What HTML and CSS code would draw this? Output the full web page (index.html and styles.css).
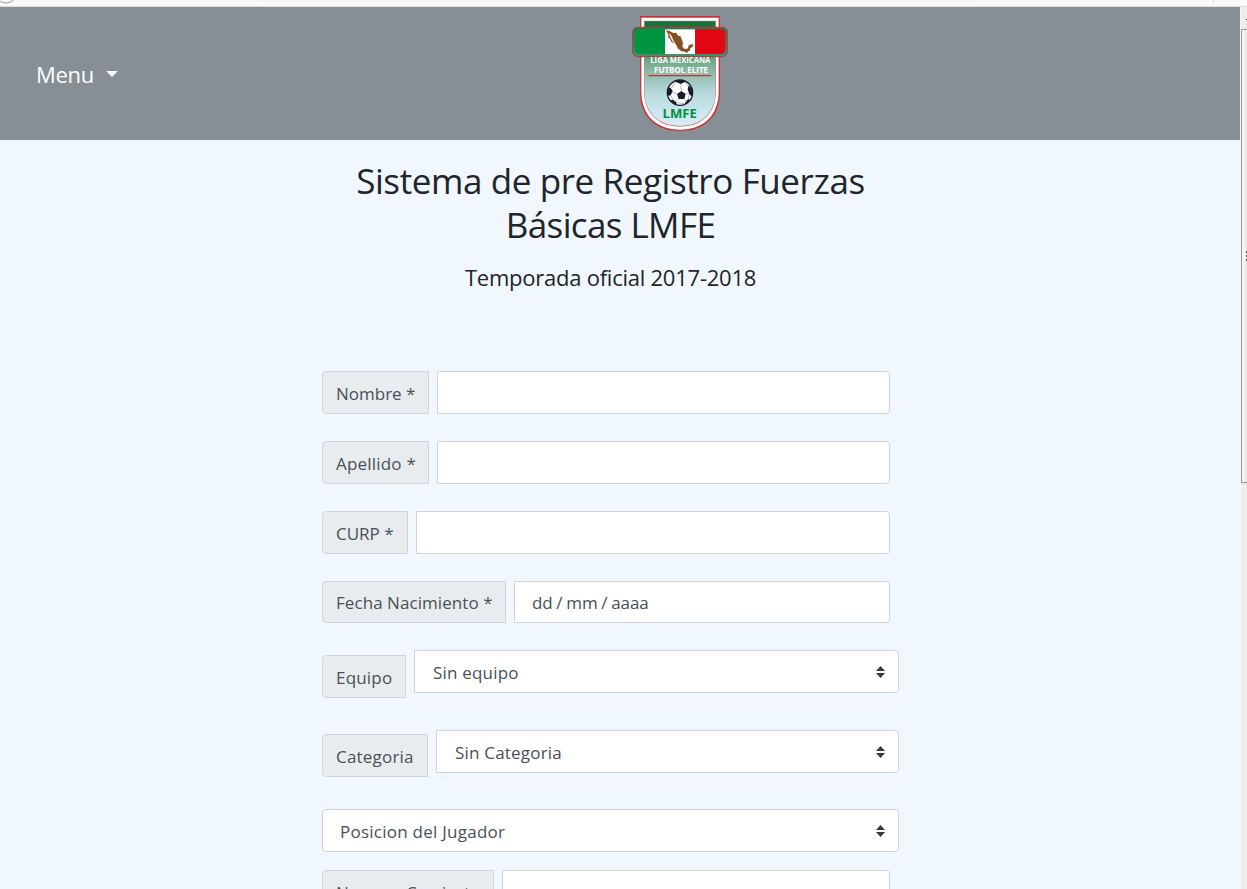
FILE: index.html
```html
<!DOCTYPE html>
<html lang="es">
<head>
<meta charset="utf-8">
<title>Sistema de pre Registro</title>
<link rel="stylesheet" href="styles.css">
</head>
<body>
<div class="chrome">
  <svg class="chrome-art" width="1247" height="6" viewBox="0 0 1247 6"><circle cx="6" cy="-8" r="11" fill="#f9f9f9" stroke="#999"/><path d="M258 0h717" stroke="#f0f0f0" stroke-width="2"/><path d="M1213.500 0v2" stroke="#ccc"/></svg>
</div>
<div class="window">
  <div class="page">
    <header class="navbar">
      <button class="menu"><span class="menu-text">Menu</span><span class="caret"></span></button>
      <svg class="logo" width="120" height="130" viewBox="0 0 360 390">
        <defs>
          <linearGradient id="shield" x1="0" y1="0" x2="0" y2="1"><stop offset="0" stop-color="#14703a"/><stop offset=".2" stop-color="#2c8050"/><stop offset=".45" stop-color="#86b59e"/><stop offset=".7" stop-color="#b9dbe0"/><stop offset="1" stop-color="#d7edf8"/></linearGradient>
          <linearGradient id="band" x1="0" y1="0" x2="0" y2="1"><stop offset="0" stop-color="#28764b"/><stop offset="1" stop-color="#4b8f69"/></linearGradient>
          <clipPath id="ball"><circle cx="180" cy="254" r="38"/></clipPath>
        </defs>
        <path d="M60 24H300V249C300 331 250 369 180 369S60 331 60 249Z" fill="#c9343a"/>
        <path d="M64 29H296V249C296 326 247 365 180 365S64 326 64 249Z" fill="#fff"/>
        <path d="M72 38H288V249C288 320 242 356 180 356S72 320 72 249Z" fill="#c98a88"/>
        <path d="M74 40H286V249C286 318 241 353 180 353S74 318 74 249Z" fill="url(#shield)"/>
        <rect x="38" y="58" width="284" height="88" rx="15" fill="url(#band)" stroke="#b5383b" stroke-width="3"/>
        <path d="M59 64H135V138H59Q44 138 44 124V78Q44 64 59 64Z" fill="#009540"/>
        <path d="M135 64H225V138H135Z" fill="#fff"/>
        <path d="M225 64H301Q316 64 316 78V124Q316 138 301 138H225Z" fill="#e30613"/>
        <path d="M138 67L149 69 160 75 168 74 175 84 181 84 185 94 189 105 187 115 193 123 203 122 207 111 220 108 218 116 211 121 210 128 204 130 201 136 195 131 184 130 173 121 169 112 162 101 157 89 151 78 148 76 151 88 157 98 162 107 154 101 150 92 145 89 146 82Z" fill="#865021"/>
        <text x="181" y="165" text-anchor="middle" class="logo-name" textLength="180" lengthAdjust="spacingAndGlyphs">LIGA MEXICANA</text>
        <text x="183" y="195" text-anchor="middle" class="logo-name" textLength="162" lengthAdjust="spacingAndGlyphs">FUTBOL ELITE</text>
        <path d="M85 203H274" stroke="#c9302f" stroke-width="4"/>
        <circle cx="180" cy="254" r="38" fill="#fff"/>
        <g clip-path="url(#ball)" fill="#151c30">
          <path d="M184 249L197 258 193 273H176L171 258Z"/>
          <path d="M166 214L186 214 195 222 182 228 168 222ZM139 244L150 238 158 248 152 262 140 264ZM206 232L222 248 217 266 208 259 203 244ZM149 277L159 275 170 284 168 294H158ZM194 286L204 274 214 275 200 292Z"/>
          <path d="M184 249L182 228M197 258L208 254M193 273L200 282M176 273L166 281M171 258L156 252M168 222L154 240M195 222L206 236M152 262L159 275M208 259L204 274M170 284L194 287" stroke="#70757f" stroke-width="1.500" fill="none"/>
        </g>
        <circle cx="180" cy="254" r="38" fill="none" stroke="#151c30" stroke-width="4"/>
        <text x="179" y="329" text-anchor="middle" class="logo-code" textLength="103" lengthAdjust="spacingAndGlyphs">LMFE</text>
      </svg>
    </header>
    <main class="content">
      <h1 class="title">Sistema de pre Registro Fuerzas<br><span class="title-end">Básicas LMFE</span></h1>
      <p class="season">Temporada oficial 2017-2018</p>
      <form class="form">
        <div class="row"><label class="tag w107"><span class="t-nombre">Nombre *</span></label><div class="field"></div></div>
        <div class="row"><label class="tag w107"><span class="t-apellido">Apellido *</span></label><div class="field"></div></div>
        <div class="row"><label class="tag w86"><span class="t-curp">CURP *</span></label><div class="field"></div></div>
        <div class="row date"><label class="tag w184"><span class="t-fecha">Fecha Nacimiento *</span></label><div class="field"><span class="t-date">dd / mm / aaaa</span></div></div>
        <div class="row pick team"><label class="tag w84"><span class="t-equipo">Equipo</span></label><div class="field select"><span class="t-equipo">Sin equipo</span><svg class="arrows" width="9" height="12" viewBox="0 0 9 12"><path d="M4.500 0L9 5H0ZM0 7H9L4.500 12Z"/></svg></div></div>
        <div class="row pick category"><label class="tag w106"><span class="t-categoria">Categoria</span></label><div class="field select"><span class="t-categoria">Sin Categoria</span><svg class="arrows" width="9" height="12" viewBox="0 0 9 12"><path d="M4.500 0L9 5H0ZM0 7H9L4.500 12Z"/></svg></div></div>
        <div class="row pick position"><div class="field select full"><span class="t-posicion">Posicion del Jugador</span><svg class="arrows" width="9" height="12" viewBox="0 0 9 12"><path d="M4.500 0L9 5H0ZM0 7H9L4.500 12Z"/></svg></div></div>
        <div class="row"><label class="tag w172"><span class="t-numero">Numero Camiseta</span></label><div class="field"></div></div>
      </form>
    </main>
  </div>
  <div class="scrollbar"><div class="scroll-up"><i></i></div><div class="thumb"><i></i><i></i><i></i></div></div>
</div>
</body>
</html>
```
FILE: styles.css
```css
* { box-sizing: border-box; }
body { margin: 0; height: 889px; overflow: hidden; background: #f0f7ff; color: #212529; font-family: "Open Sans", "Noto Sans", sans-serif; }
.chrome { height: 7px; background: #f9f9f9; border-bottom: 1px solid #ddd; }
.chrome-art { display: block; }
.window { display: flex; height: 882px; }
.page { width: 1240px; height: 882px; overflow: hidden; }
.navbar { height: 133px; background: #868e96; display: flex; }
.menu { width: 120px; height: 49px; margin: 42px 0 0 17px; padding: 0 0 0 18px; border: 1px solid #858d99; background: none; color: #fff; display: flex; align-items: center; font: 22px "Open Sans", sans-serif; }
.menu-text { letter-spacing: -0.3px; width: 70px; text-align: left; }
.caret { border: 6px solid transparent; border-top-color: #fff; border-bottom: 0; margin-top: 0; }
.logo { margin: 1px 0 0 483px; }
.logo-name { font: bold 26px "Open Sans", sans-serif; fill: #fff; }
.logo-code { font: bold 37px "Open Sans", sans-serif; fill: #00913f; }
.content { width: 577px; margin-left: 322px; padding-top: 19px; }
.title { margin: 0; font-size: 35px; font-weight: 400; line-height: 44px; letter-spacing: -0.4px; text-align: center; white-space: nowrap; }
.title-end { letter-spacing: -0.6px; }
.title, .season { width: 577px; }
.season { margin: 15px 0 0; font-size: 22px; line-height: 30px; letter-spacing: -0.24px; text-align: center; }
.form { margin-top: 79px; font-size: 17px; color: #495057; }
.row { display: flex; gap: 8px; width: 568px; height: 43px; margin-bottom: 27px; white-space: nowrap; }
.tag { height: 43px; padding: 2px 0 0 13px; background: #e9ecef; border: 1px solid #ced4da; border-radius: 4px 0 0 4px; display: flex; align-items: center; }
.field { flex: 1; height: 43px; padding: 0 13px 0 18px; background: #fff; border: 1px solid #ced4da; border-radius: 0 4px 4px 0; display: flex; align-items: center; }
.w84 { width: 84px; } .w86 { width: 86px; } .w106 { width: 106px; } .w107 { width: 107px; } .w172 { width: 172px; } .w184 { width: 184px; }
.t-apellido, .t-equipo, .t-categoria { letter-spacing: 0.2px; }
.t-posicion { letter-spacing: 0.25px; }
.t-fecha { letter-spacing: 0.06px; }
.date, .date .tag, .date .field { height: 42px; }
.date .tag { padding-top: 0; }
.date .field { padding-left: 17px; }
.t-date { letter-spacing: -0.15px; word-spacing: -0.4px; }
.pick { width: 577px; }
.team { height: 48px; margin-bottom: 32px; }
.category { height: 47px; margin-bottom: 32px; }
.pick .tag { align-self: flex-end; }
.select { justify-content: space-between; padding-top: 2px; }
.arrows { fill: #343a40; margin-top: -2px; }
.full { border-radius: 4px; padding-left: 17px; }
.position { margin-bottom: 18px; }
.scrollbar { width: 7px; height: 882px; background: #ededed; border-left: 1px solid #f5f7fa; overflow: hidden; }
.scroll-up { height: 22px; padding: 12px 0 0 5px; }
.scroll-up i { display: block; height: 1px; background: #333; }
.thumb { height: 454px; border: 1px solid #929292; border-right: 0; border-radius: 2px 0 0 2px; background: linear-gradient(90deg, #fafafa, #e8e8e8); padding: 221px 0 0 4px; display: flex; flex-direction: column; gap: 2px; }
.thumb i { height: 2px; background: #555; }
```
